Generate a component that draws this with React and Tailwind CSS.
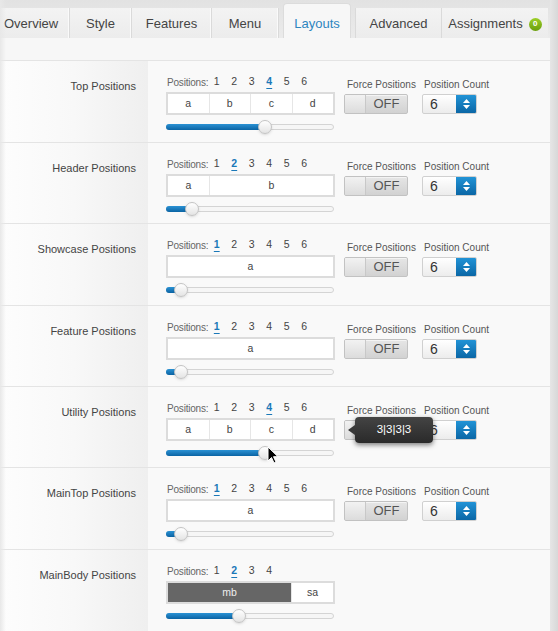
const rows = [
  { label: 'Top Positions', count: 6, active: 4, cells: [['a', 1], ['b', 1], ['c', 1], ['d', 1]], fill: 99, h: 'h-[82px]', controls: true },
  { label: 'Header Positions', count: 6, active: 2, cells: [['a', 1], ['b', 3]], fill: 26, h: 'h-[81px]', controls: true },
  { label: 'Showcase Positions', count: 6, active: 1, cells: [['a', 1]], fill: 15, h: 'h-[82px]', controls: true },
  { label: 'Feature Positions', count: 6, active: 1, cells: [['a', 1]], fill: 15, h: 'h-[81px]', controls: true },
  { label: 'Utility Positions', count: 6, active: 4, cells: [['a', 1], ['b', 1], ['c', 1], ['d', 1]], fill: 99, h: 'h-[81px]', controls: true, tooltip: true },
  { label: 'MainTop Positions', count: 6, active: 1, cells: [['a', 1]], fill: 15, h: 'h-[82px]', controls: true },
  { label: 'MainBody Positions', count: 4, active: 2, cells: [['mb', 3, true], ['sa', 1]], fill: 73, h: 'h-[82px]', controls: false },
];

const tabs = [
  { name: 'Overview', w: 'w-[70px]', cls: 'justify-start pl-[4px]' },
  { name: 'Style', w: 'w-[62px]' },
  { name: 'Features', w: 'w-[80px]' },
  { name: 'Menu', w: 'w-[67px]' },
];

const Slider = ({ fill }) => (
  <div className="relative mt-[9px] h-[6px] w-[168px] rounded-full border border-[#d4d4d4] bg-[#f6f6f6]">
    <div
      className="absolute left-[-1px] top-[-1px] h-[6px] rounded-full bg-gradient-to-b from-[#2a92d4] to-[#0a64a4]"
      style={{ width: fill + 'px' }}
    />
    <div
      className="absolute top-[-5px] h-[14px] w-[14px] rounded-full border border-[#c4c4c4] bg-gradient-to-b from-white to-[#e4e4e4] shadow-sm"
      style={{ left: fill - 8 + 'px' }}
    />
  </div>
);

const Toggle = () => (
  <div className="flex h-[20px] w-[64px] overflow-hidden rounded-[2px] border border-[#c2c2c2] bg-gradient-to-b from-[#e6e6e6] to-[#d2d2d2] shadow-[inset_0_1px_0_#f4f4f4]">
    <div className="w-[21px] border-r border-[#c8c8c8] bg-gradient-to-b from-[#f2f2f2] to-[#dcdcdc]" />
    <div className="flex flex-1 items-center justify-center text-[13px] text-[#555]">OFF</div>
  </div>
);

const CountSelect = () => (
  <div className="flex h-[20px] w-[55px] overflow-hidden rounded-[2px] border border-[#d0d0d0] bg-gradient-to-b from-white to-[#ececec]">
    <div className="flex flex-1 items-center pl-[7px] text-[14px] text-[#333]">6</div>
    <div className="flex w-[20px] flex-col items-center justify-center gap-[2px] bg-gradient-to-b from-[#2193d6] to-[#0b67a6]">
      <svg width="7" height="4" viewBox="0 0 7 4"><path d="M3.5 0L7 4H0z" fill="#fff" /></svg>
      <svg width="7" height="4" viewBox="0 0 7 4"><path d="M0 0h7L3.5 4z" fill="#fff" /></svg>
    </div>
  </div>
);

const Row = ({ row }) => (
  <div className={`flex ${row.h} border-t border-[#e4e4e4]`}>
    <div className="w-[148px] shrink-0 bg-gradient-to-r from-[#fdfdfd] via-[#f8f8f8] to-[#efefef] pr-[12px] pt-[17px] text-right text-[11px] text-[#444]">
      {row.label}
    </div>
    <div className="relative flex flex-1 bg-[#f9f9f9] pl-[18px] pt-[14px]">
      <div className="w-[169px]">
        <div className="flex h-[14px] items-center text-[10px] text-[#555]">
          <span className="w-[42px] shrink-0 whitespace-nowrap pl-[1px] tracking-[-0.2px] text-[#666]">Positions:</span>
          {Array.from({ length: row.count }, (_, i) => i + 1).map((n) => (
            <span
              key={n}
              className={`w-[17.5px] text-center text-[10.5px] ${
                n === row.active ? 'font-semibold text-[#1a78b8] underline underline-offset-[3px]' : 'text-[#444]'
              }`}
            >
              {n}
            </span>
          ))}
        </div>
        <div className="mt-[3px] flex h-[23px] w-[169px] border-2 border-[#dcdcdc] bg-white">
          {row.cells.map(([t, f, dark], i) => (
            <div
              key={i}
              className={`flex items-center justify-center text-[10.5px] ${
                i > 0 ? 'border-l border-[#e6e6e6]' : ''
              } ${dark ? 'bg-[#666] text-[#eee]' : 'text-[#444]'}`}
              style={{ flex: f }}
            >
              {t}
            </div>
          ))}
        </div>
        <Slider fill={row.fill} />
      </div>
      {row.controls && (
        <div className="ml-[9px] flex pt-[4px]">
          <div className="flex w-[78px] flex-col">
            <span className="whitespace-nowrap pl-[3px] text-[10px] leading-[12px] text-[#555]">Force Positions</span>
            <div className="mt-[3px]"><Toggle /></div>
          </div>
          <div className="flex flex-col">
            <span className="whitespace-nowrap pl-[2px] text-[10px] leading-[12px] text-[#555]">Position Count</span>
            <div className="mt-[3px]"><CountSelect /></div>
          </div>
        </div>
      )}
      {row.tooltip && (
        <>
          <div className="absolute left-[207px] top-[30px] flex h-[26px] w-[78px] items-center justify-center rounded-[4px] bg-gradient-to-b from-[#444] to-[#2a2a2a] text-[11.5px] text-white shadow-[0_2px_5px_rgba(0,0,0,0.5)]">
            3|3|3|3
            <div className="absolute left-[-7px] top-[8px] h-0 w-0 border-y-[5px] border-r-[7px] border-y-transparent border-r-[#383838]" />
          </div>
          <svg className="absolute left-[119px] top-[59px]" width="12" height="18" viewBox="0 0 12 18">
            <path d="M1 1v14l3.5-3.5 2.5 5.5 2-1-2.5-5.3H11z" fill="#000" stroke="#fff" strokeWidth="1" />
          </svg>
        </>
      )}
    </div>
  </div>
);

export default function App() {
  return (
    <div className="relative h-[631px] w-[558px] overflow-hidden bg-[#f4f4f4] font-['Liberation_Sans',Arial,sans-serif]">
      <div className="flex h-full">
        <div className="w-[550px] shrink-0">
          {/* Tabs */}
          <div className="flex h-[38px] items-end bg-gradient-to-b from-[#e2e2e2] to-[#ebebeb]">
            {tabs.map((t) => (
              <div
                key={t.name}
                className={`flex h-[30px] ${t.w} items-center ${t.cls || 'justify-center'} border-r border-[#dadada] bg-gradient-to-b from-[#f3f3f3] to-[#ececec] pt-[2px] text-[13px] text-[#444] shadow-[inset_-1px_0_0_#fafafa]`}
              >
                {t.name}
              </div>
            ))}
            <div className="ml-[4px] flex h-[35px] w-[68px] items-center justify-center rounded-t-[4px] border border-b-0 border-[#dcdcdc] bg-[#f7f7f7] pt-[6px] text-[13px] text-[#2e86bf]">
              Layouts
            </div>
            <div className="ml-[4px] flex h-[30px] w-[87px] items-center justify-center border-x border-[#dadada] bg-gradient-to-b from-[#f3f3f3] to-[#ececec] pt-[2px] text-[13px] text-[#444]">
              Advanced
            </div>
            <div className="flex h-[30px] w-[106px] items-center justify-center gap-[6px] bg-gradient-to-b from-[#f3f3f3] to-[#ececec] pt-[2px] text-[13px] text-[#444]">
              Assignments
              <span className="flex h-[13px] w-[13px] items-center justify-center rounded-full bg-gradient-to-b from-[#9ccf26] to-[#6a9e0c] text-[8px] font-bold text-white">
                0
              </span>
            </div>
          </div>
          <div className="h-[22px] bg-[#f7f7f7]" />
          {rows.map((r) => (
            <Row key={r.label} row={r} />
          ))}
        </div>
        <div className="flex-1 bg-gradient-to-r from-[#e6e6e6] to-[#d8d8d8]" />
      </div>
      <div className="pointer-events-none absolute inset-y-0 left-0 w-[6px] bg-gradient-to-r from-[#e8e8e8] to-transparent" />
    </div>
  );
}
